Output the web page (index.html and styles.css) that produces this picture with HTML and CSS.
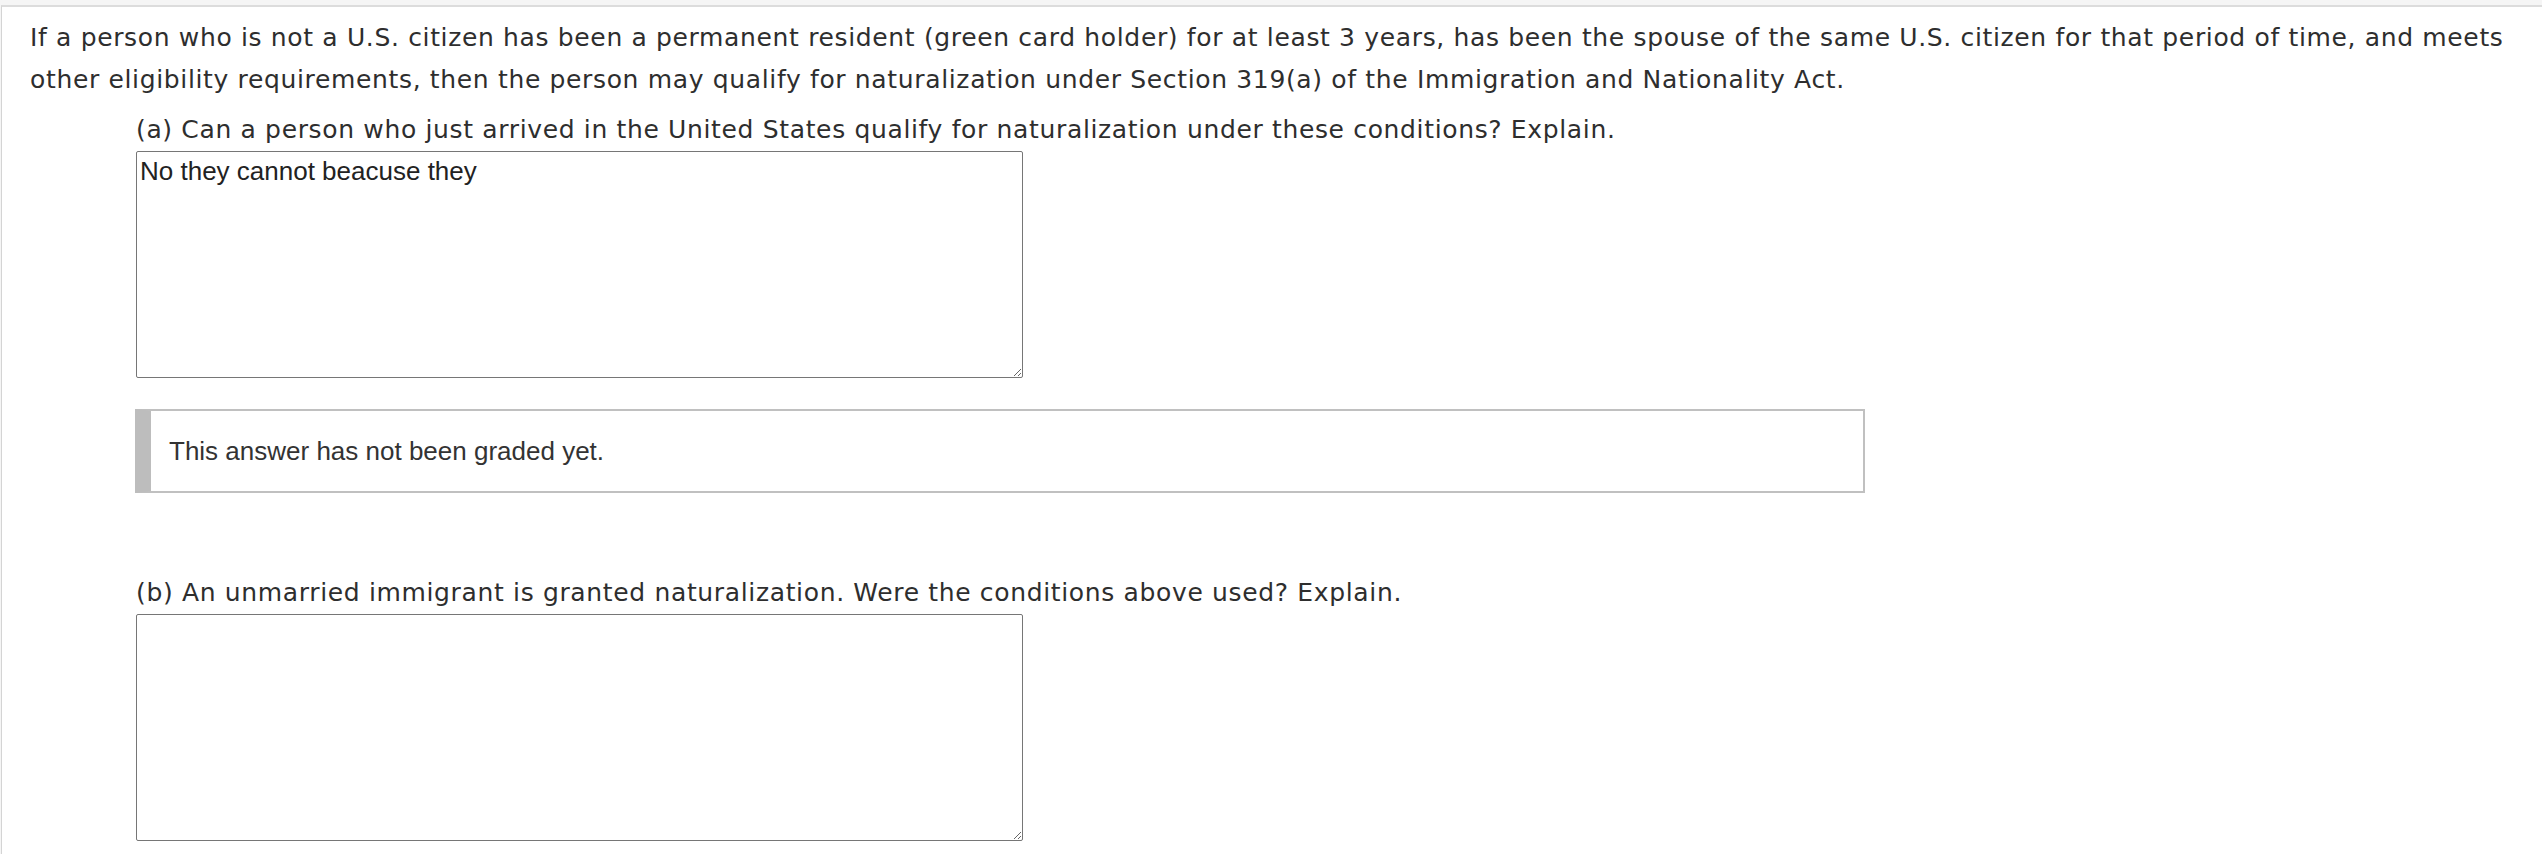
FILE: index.html
```html
<!DOCTYPE html>
<html lang="en">
<head>
<meta charset="utf-8">
<title>Question</title>
<link rel="stylesheet" href="styles.css">
</head>
<body>
<div class="page">
  <div class="question">
    <p class="stem">If a person who is not a U.S. citizen has been a permanent resident (green card holder) for at least 3 years, has been the spouse of the same U.S. citizen for that period of time, and meets other eligibility requirements, then the person may qualify for naturalization under Section 319(a) of the Immigration and Nationality Act.</p>
    <div class="part part-a">
      <p class="prompt">(a) Can a person who just arrived in the United States qualify for naturalization under these conditions? Explain.</p>
      <textarea class="answer">No they cannot beacuse they</textarea>
      <div class="grading">This answer has not been graded yet.</div>
    </div>
    <div class="part part-b">
      <p class="prompt">(b) An unmarried immigrant is granted naturalization. Were the conditions above used? Explain.</p>
      <textarea class="answer"></textarea>
    </div>
  </div>
</div>
</body>
</html>
```
FILE: styles.css
```css
html, body {
  margin: 0;
  padding: 0;
}
body {
  background: #f5f5f5;
  height: 854px;
  overflow: hidden;
}
.page {
  margin-top: 5px;
  margin-left: 1px;
  border-top: 2px solid #dcdcdc;
  border-left: 1px solid #d4d4d4;
  background: #ffffff;
  height: 847px;
  overflow: hidden;
}
.question {
  padding: 10px 20px 0 28px;
  font-family: "DejaVu Sans", Verdana, sans-serif;
  font-size: 25px;
  letter-spacing: 0.65px;
  line-height: 42px;
  color: #2e2e2e;
}
.stem {
  margin: 0;
}
.part {
  margin-left: 106px;
}
.part-a {
  margin-top: 8px;
}
.part-b {
  margin-top: 79px;
}
.prompt {
  margin: 0;
}
.answer {
  display: block;
  box-sizing: border-box;
  width: 887px;
  height: 227px;
  margin: 0;
  padding: 4px 3px;
  border: 1px solid #767676;
  border-radius: 2px;
  font-family: "Liberation Sans", Arial, sans-serif;
  font-size: 26px;
  letter-spacing: 0;
  line-height: 30px;
  color: #222222;
  background: #ffffff;
}
.grading {
  box-sizing: border-box;
  width: 1730px;
  height: 84px;
  margin-top: 31px;
  margin-left: -1px;
  display: flex;
  align-items: center;
  padding-left: 18px;
  border: 2px solid #c0c0c0;
  border-left: 16px solid #bdbdbd;
  font-family: "Liberation Sans", Arial, sans-serif;
  font-size: 26px;
  letter-spacing: 0;
  line-height: 30px;
  color: #333333;
}
```
